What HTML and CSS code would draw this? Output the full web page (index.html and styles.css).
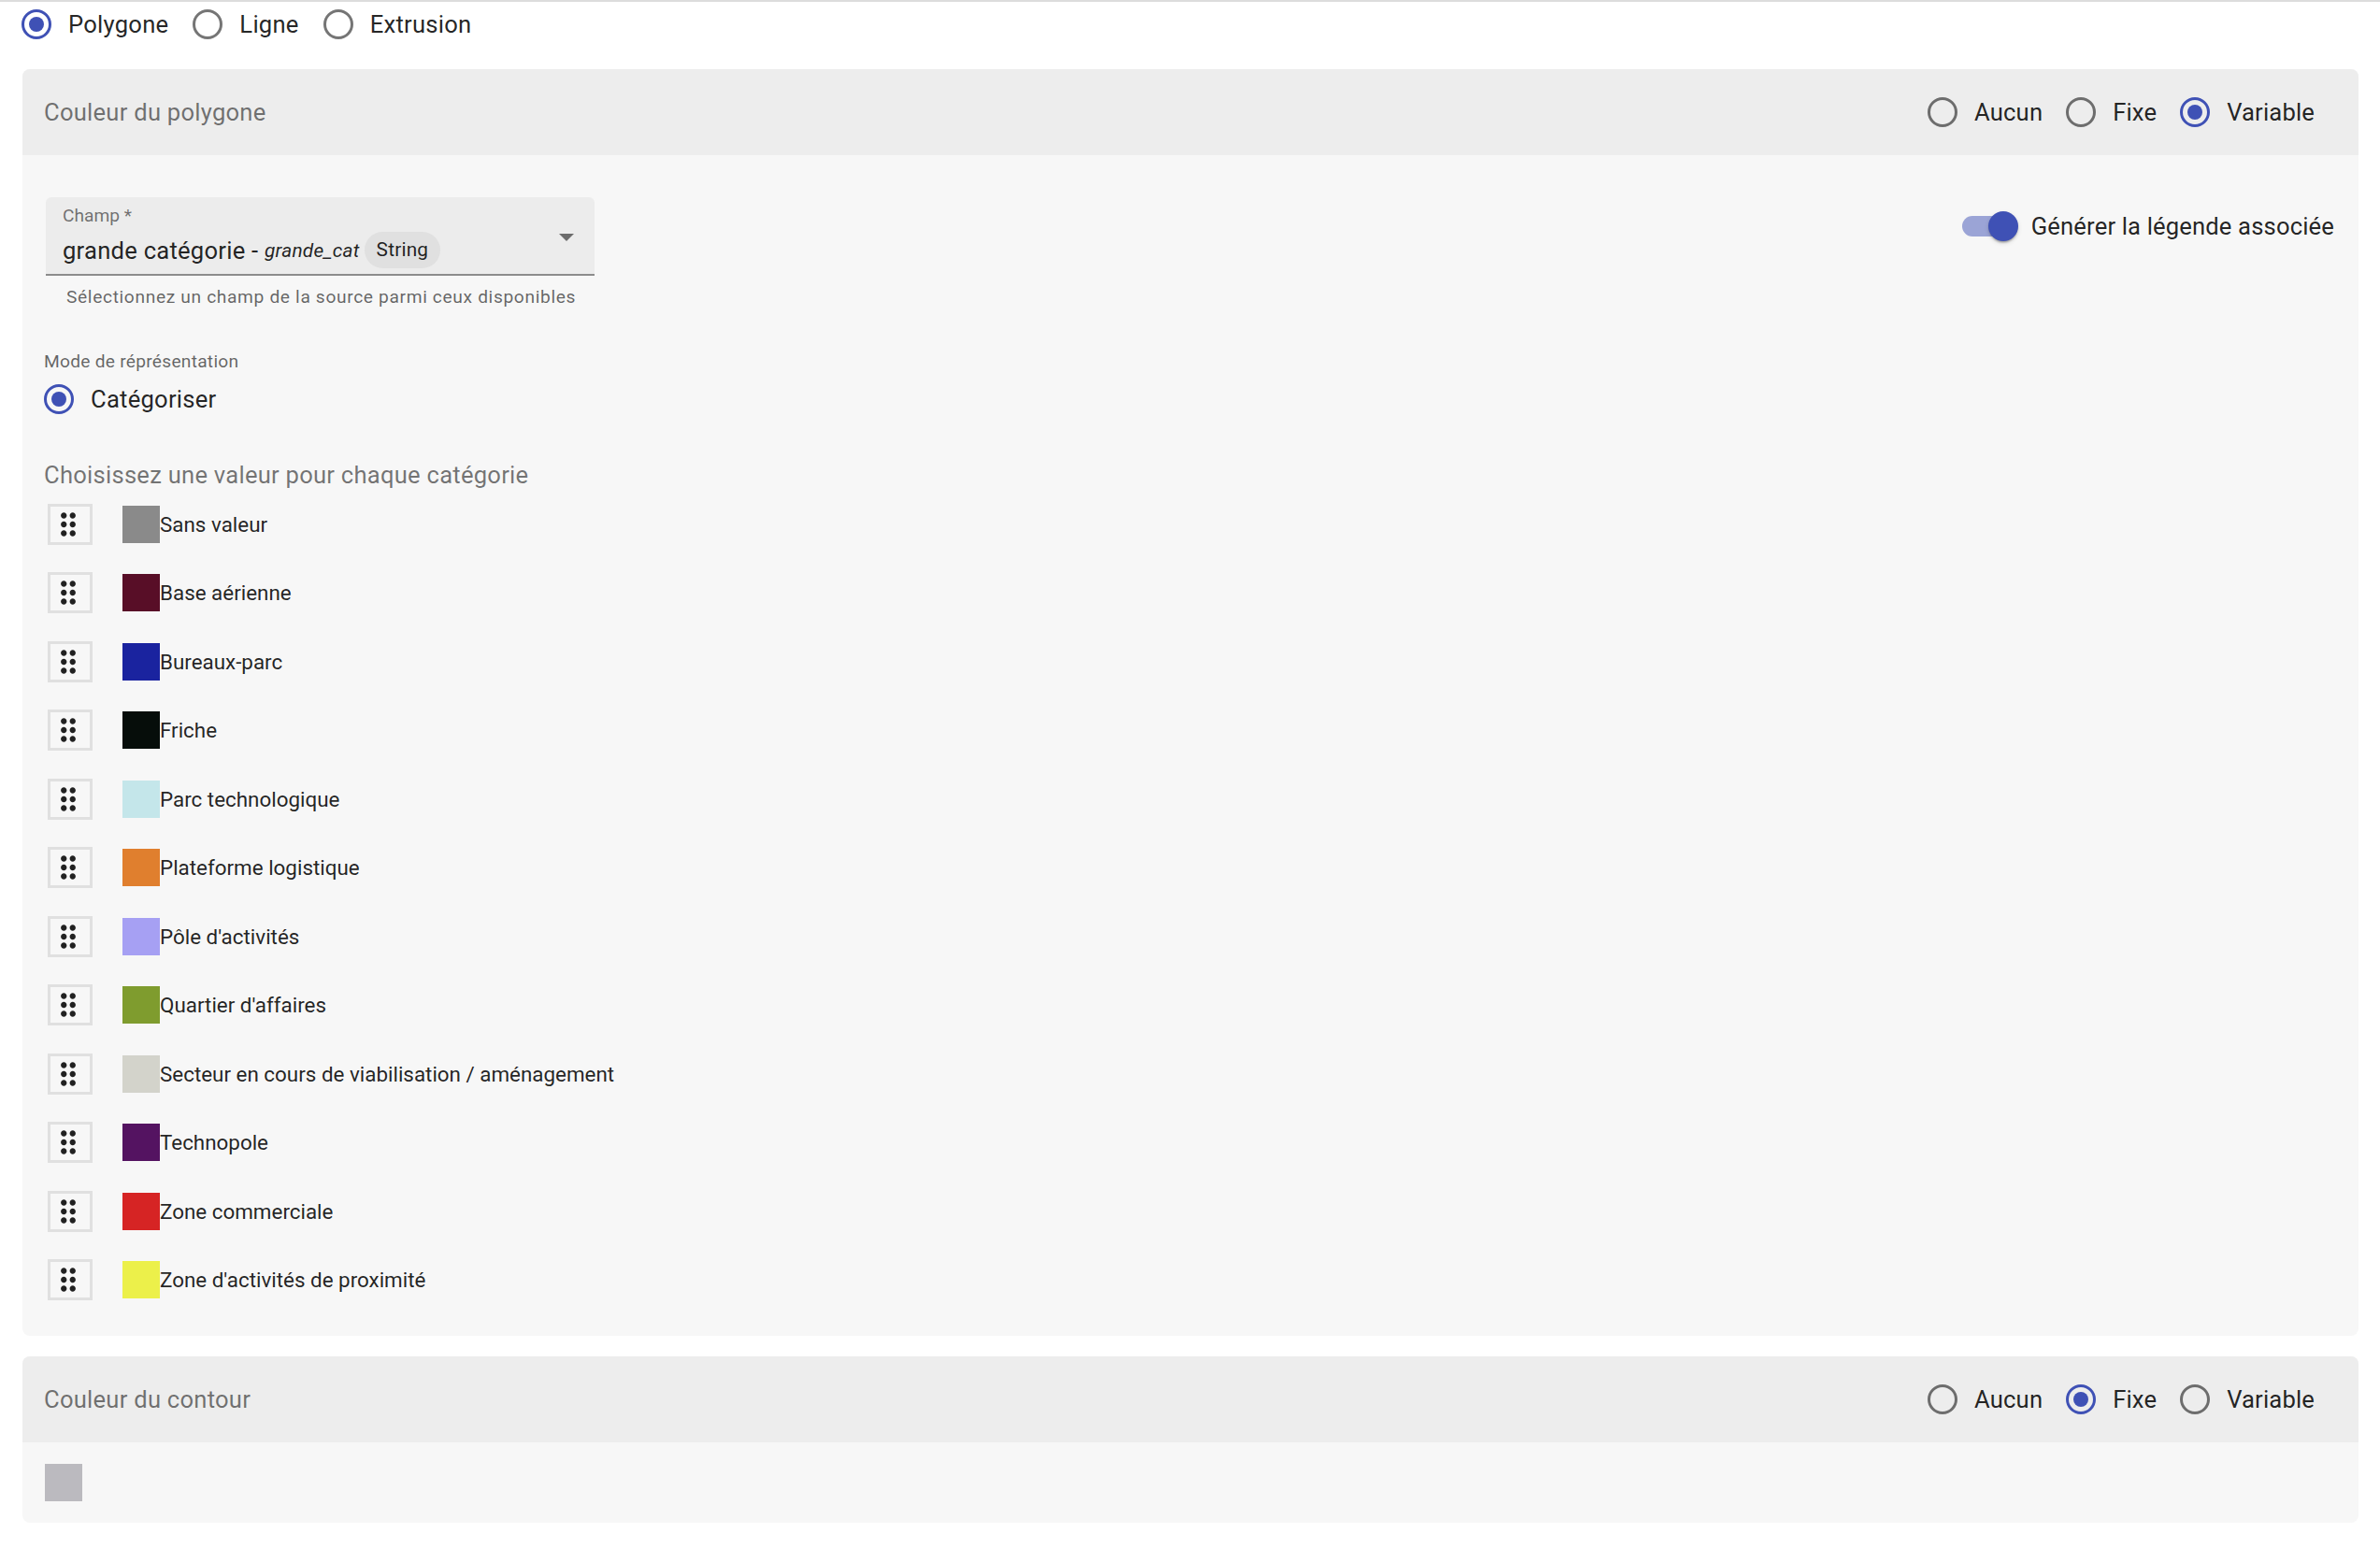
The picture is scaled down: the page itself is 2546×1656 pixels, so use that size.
FILE: index.html
```html
<!DOCTYPE html>
<html lang="fr">
<head>
    <meta charset="UTF-8">
    <meta name="viewport" content="width=device-width, initial-scale=1.0">
    <title>Style de la couche</title>
    <link rel="stylesheet" href="styles.css">
</head>
<body>

    <!-- Type de géométrie -->
    <div class="type-row">
        <label class="radio-option"><span class="radio checked"></span>Polygone</label>
        <label class="radio-option"><span class="radio"></span>Ligne</label>
        <label class="radio-option"><span class="radio"></span>Extrusion</label>
    </div>

    <!-- Couleur du polygone -->
    <div class="card">
        <div class="card-header">
            <span class="card-title">Couleur du polygone</span>
            <div class="radio-group">
                <label class="radio-option"><span class="radio"></span>Aucun</label>
                <label class="radio-option"><span class="radio"></span>Fixe</label>
                <label class="radio-option"><span class="radio checked"></span>Variable</label>
            </div>
        </div>
        <div class="card-body">
            <div class="field-row">
                <div class="field">
                    <div class="select">
                        <span class="select-label">Champ *</span>
                        <div class="select-value">
                            <span class="value-name">grande catégorie - </span>
                            <em class="value-key">grande_cat</em>
                            <span class="chip">String</span>
                        </div>
                        <svg class="select-arrow" viewBox="0 0 16 8"><polygon points="0,0 16,0 8,8"/></svg>
                    </div>
                    <p class="helper">Sélectionnez un champ de la source parmi ceux disponibles</p>
                </div>
                <label class="switch-label">
                    <span class="switch">
                        <span class="switch-track"></span>
                        <span class="switch-thumb"></span>
                    </span>
                    Générer la légende associée
                </label>
            </div>

            <p class="caption">Mode de réprésentation</p>
            <label class="radio-option mode-option"><span class="radio checked"></span>Catégoriser</label>

            <p class="section-title">Choisissez une valeur pour chaque catégorie</p>
            <ul class="category-list">
                <li class="category">
                    <span class="handle"><svg viewBox="0 0 24 24"><path d="M11 18c0 1.1-.9 2-2 2s-2-.9-2-2 .9-2 2-2 2 .9 2 2zm-2-8c-1.1 0-2 .9-2 2s.9 2 2 2 2-.9 2-2-.9-2-2-2zm0-6c-1.1 0-2 .9-2 2s.9 2 2 2 2-.9 2-2-.9-2-2-2zm6 4c1.1 0 2-.9 2-2s-.9-2-2-2-2 .9-2 2 .9 2 2 2zm0 2c-1.1 0-2 .9-2 2s.9 2 2 2 2-.9 2-2-.9-2-2-2zm0 6c-1.1 0-2 .9-2 2s.9 2 2 2 2-.9 2-2-.9-2-2-2z"/></svg></span>
                    <span class="swatch" style="background-color: #8a8a8a;"></span>Sans valeur
                </li>
                <li class="category">
                    <span class="handle"><svg viewBox="0 0 24 24"><path d="M11 18c0 1.1-.9 2-2 2s-2-.9-2-2 .9-2 2-2 2 .9 2 2zm-2-8c-1.1 0-2 .9-2 2s.9 2 2 2 2-.9 2-2-.9-2-2-2zm0-6c-1.1 0-2 .9-2 2s.9 2 2 2 2-.9 2-2-.9-2-2-2zm6 4c1.1 0 2-.9 2-2s-.9-2-2-2-2 .9-2 2 .9 2 2 2zm0 2c-1.1 0-2 .9-2 2s.9 2 2 2 2-.9 2-2-.9-2-2-2zm0 6c-1.1 0-2 .9-2 2s.9 2 2 2 2-.9 2-2-.9-2-2-2z"/></svg></span>
                    <span class="swatch" style="background-color: #580e27;"></span>Base aérienne
                </li>
                <li class="category">
                    <span class="handle"><svg viewBox="0 0 24 24"><path d="M11 18c0 1.1-.9 2-2 2s-2-.9-2-2 .9-2 2-2 2 .9 2 2zm-2-8c-1.1 0-2 .9-2 2s.9 2 2 2 2-.9 2-2-.9-2-2-2zm0-6c-1.1 0-2 .9-2 2s.9 2 2 2 2-.9 2-2-.9-2-2-2zm6 4c1.1 0 2-.9 2-2s-.9-2-2-2-2 .9-2 2 .9 2 2 2zm0 2c-1.1 0-2 .9-2 2s.9 2 2 2 2-.9 2-2-.9-2-2-2zm0 6c-1.1 0-2 .9-2 2s.9 2 2 2 2-.9 2-2-.9-2-2-2z"/></svg></span>
                    <span class="swatch" style="background-color: #1a239f;"></span>Bureaux-parc
                </li>
                <li class="category">
                    <span class="handle"><svg viewBox="0 0 24 24"><path d="M11 18c0 1.1-.9 2-2 2s-2-.9-2-2 .9-2 2-2 2 .9 2 2zm-2-8c-1.1 0-2 .9-2 2s.9 2 2 2 2-.9 2-2-.9-2-2-2zm0-6c-1.1 0-2 .9-2 2s.9 2 2 2 2-.9 2-2-.9-2-2-2zm6 4c1.1 0 2-.9 2-2s-.9-2-2-2-2 .9-2 2 .9 2 2 2zm0 2c-1.1 0-2 .9-2 2s.9 2 2 2 2-.9 2-2-.9-2-2-2zm0 6c-1.1 0-2 .9-2 2s.9 2 2 2 2-.9 2-2-.9-2-2-2z"/></svg></span>
                    <span class="swatch" style="background-color: #060d0a;"></span>Friche
                </li>
                <li class="category">
                    <span class="handle"><svg viewBox="0 0 24 24"><path d="M11 18c0 1.1-.9 2-2 2s-2-.9-2-2 .9-2 2-2 2 .9 2 2zm-2-8c-1.1 0-2 .9-2 2s.9 2 2 2 2-.9 2-2-.9-2-2-2zm0-6c-1.1 0-2 .9-2 2s.9 2 2 2 2-.9 2-2-.9-2-2-2zm6 4c1.1 0 2-.9 2-2s-.9-2-2-2-2 .9-2 2 .9 2 2 2zm0 2c-1.1 0-2 .9-2 2s.9 2 2 2 2-.9 2-2-.9-2-2-2zm0 6c-1.1 0-2 .9-2 2s.9 2 2 2 2-.9 2-2-.9-2-2-2z"/></svg></span>
                    <span class="swatch" style="background-color: #c4e6ea;"></span>Parc technologique
                </li>
                <li class="category">
                    <span class="handle"><svg viewBox="0 0 24 24"><path d="M11 18c0 1.1-.9 2-2 2s-2-.9-2-2 .9-2 2-2 2 .9 2 2zm-2-8c-1.1 0-2 .9-2 2s.9 2 2 2 2-.9 2-2-.9-2-2-2zm0-6c-1.1 0-2 .9-2 2s.9 2 2 2 2-.9 2-2-.9-2-2-2zm6 4c1.1 0 2-.9 2-2s-.9-2-2-2-2 .9-2 2 .9 2 2 2zm0 2c-1.1 0-2 .9-2 2s.9 2 2 2 2-.9 2-2-.9-2-2-2zm0 6c-1.1 0-2 .9-2 2s.9 2 2 2 2-.9 2-2-.9-2-2-2z"/></svg></span>
                    <span class="swatch" style="background-color: #e07f2e;"></span>Plateforme logistique
                </li>
                <li class="category">
                    <span class="handle"><svg viewBox="0 0 24 24"><path d="M11 18c0 1.1-.9 2-2 2s-2-.9-2-2 .9-2 2-2 2 .9 2 2zm-2-8c-1.1 0-2 .9-2 2s.9 2 2 2 2-.9 2-2-.9-2-2-2zm0-6c-1.1 0-2 .9-2 2s.9 2 2 2 2-.9 2-2-.9-2-2-2zm6 4c1.1 0 2-.9 2-2s-.9-2-2-2-2 .9-2 2 .9 2 2 2zm0 2c-1.1 0-2 .9-2 2s.9 2 2 2 2-.9 2-2-.9-2-2-2zm0 6c-1.1 0-2 .9-2 2s.9 2 2 2 2-.9 2-2-.9-2-2-2z"/></svg></span>
                    <span class="swatch" style="background-color: #a6a0f3;"></span>Pôle d'activités
                </li>
                <li class="category">
                    <span class="handle"><svg viewBox="0 0 24 24"><path d="M11 18c0 1.1-.9 2-2 2s-2-.9-2-2 .9-2 2-2 2 .9 2 2zm-2-8c-1.1 0-2 .9-2 2s.9 2 2 2 2-.9 2-2-.9-2-2-2zm0-6c-1.1 0-2 .9-2 2s.9 2 2 2 2-.9 2-2-.9-2-2-2zm6 4c1.1 0 2-.9 2-2s-.9-2-2-2-2 .9-2 2 .9 2 2 2zm0 2c-1.1 0-2 .9-2 2s.9 2 2 2 2-.9 2-2-.9-2-2-2zm0 6c-1.1 0-2 .9-2 2s.9 2 2 2 2-.9 2-2-.9-2-2-2z"/></svg></span>
                    <span class="swatch" style="background-color: #7f9c2e;"></span>Quartier d'affaires
                </li>
                <li class="category">
                    <span class="handle"><svg viewBox="0 0 24 24"><path d="M11 18c0 1.1-.9 2-2 2s-2-.9-2-2 .9-2 2-2 2 .9 2 2zm-2-8c-1.1 0-2 .9-2 2s.9 2 2 2 2-.9 2-2-.9-2-2-2zm0-6c-1.1 0-2 .9-2 2s.9 2 2 2 2-.9 2-2-.9-2-2-2zm6 4c1.1 0 2-.9 2-2s-.9-2-2-2-2 .9-2 2 .9 2 2 2zm0 2c-1.1 0-2 .9-2 2s.9 2 2 2 2-.9 2-2-.9-2-2-2zm0 6c-1.1 0-2 .9-2 2s.9 2 2 2 2-.9 2-2-.9-2-2-2z"/></svg></span>
                    <span class="swatch" style="background-color: #d3d3cb;"></span>Secteur en cours de viabilisation / aménagement
                </li>
                <li class="category">
                    <span class="handle"><svg viewBox="0 0 24 24"><path d="M11 18c0 1.1-.9 2-2 2s-2-.9-2-2 .9-2 2-2 2 .9 2 2zm-2-8c-1.1 0-2 .9-2 2s.9 2 2 2 2-.9 2-2-.9-2-2-2zm0-6c-1.1 0-2 .9-2 2s.9 2 2 2 2-.9 2-2-.9-2-2-2zm6 4c1.1 0 2-.9 2-2s-.9-2-2-2-2 .9-2 2 .9 2 2 2zm0 2c-1.1 0-2 .9-2 2s.9 2 2 2 2-.9 2-2-.9-2-2-2zm0 6c-1.1 0-2 .9-2 2s.9 2 2 2 2-.9 2-2-.9-2-2-2z"/></svg></span>
                    <span class="swatch" style="background-color: #541361;"></span>Technopole
                </li>
                <li class="category">
                    <span class="handle"><svg viewBox="0 0 24 24"><path d="M11 18c0 1.1-.9 2-2 2s-2-.9-2-2 .9-2 2-2 2 .9 2 2zm-2-8c-1.1 0-2 .9-2 2s.9 2 2 2 2-.9 2-2-.9-2-2-2zm0-6c-1.1 0-2 .9-2 2s.9 2 2 2 2-.9 2-2-.9-2-2-2zm6 4c1.1 0 2-.9 2-2s-.9-2-2-2-2 .9-2 2 .9 2 2 2zm0 2c-1.1 0-2 .9-2 2s.9 2 2 2 2-.9 2-2-.9-2-2-2zm0 6c-1.1 0-2 .9-2 2s.9 2 2 2 2-.9 2-2-.9-2-2-2z"/></svg></span>
                    <span class="swatch" style="background-color: #d62424;"></span>Zone commerciale
                </li>
                <li class="category">
                    <span class="handle"><svg viewBox="0 0 24 24"><path d="M11 18c0 1.1-.9 2-2 2s-2-.9-2-2 .9-2 2-2 2 .9 2 2zm-2-8c-1.1 0-2 .9-2 2s.9 2 2 2 2-.9 2-2-.9-2-2-2zm0-6c-1.1 0-2 .9-2 2s.9 2 2 2 2-.9 2-2-.9-2-2-2zm6 4c1.1 0 2-.9 2-2s-.9-2-2-2-2 .9-2 2 .9 2 2 2zm0 2c-1.1 0-2 .9-2 2s.9 2 2 2 2-.9 2-2-.9-2-2-2zm0 6c-1.1 0-2 .9-2 2s.9 2 2 2 2-.9 2-2-.9-2-2-2z"/></svg></span>
                    <span class="swatch" style="background-color: #ecf04a;"></span>Zone d'activités de proximité
                </li>
            </ul>
        </div>
    </div>

    <!-- Couleur du contour -->
    <div class="card">
        <div class="card-header">
            <span class="card-title">Couleur du contour</span>
            <div class="radio-group">
                <label class="radio-option"><span class="radio"></span>Aucun</label>
                <label class="radio-option"><span class="radio checked"></span>Fixe</label>
                <label class="radio-option"><span class="radio"></span>Variable</label>
            </div>
        </div>
        <div class="card-body contour-body">
            <span class="swatch" style="background-color: #bbbabf;"></span>
        </div>
    </div>

</body>
</html>
```

FILE: styles.css
```css
* {
    box-sizing: border-box;
}
body {
    margin: 0;
    padding: 0 23px 0 24px;
    border-top: 2px solid #dcdcdc;
    font-family: Roboto, "Liberation Sans", sans-serif;
    color: rgba(0, 0, 0, 0.87);
    background-color: #fff;
}

/* radios */
.type-row {
    display: flex;
    align-items: center;
    gap: 26px;
    height: 48px;
    margin-left: -1px;
}
.radio-option {
    display: flex;
    align-items: center;
    gap: 18px;
    font-size: 25.6px;
    line-height: 38px;
    letter-spacing: 0.24px;
}
.radio {
    display: flex;
    align-items: center;
    justify-content: center;
    flex-shrink: 0;
    width: 32px;
    height: 32px;
    border: 3px solid rgba(0, 0, 0, 0.54);
    border-radius: 50%;
}
.radio.checked {
    border-color: #3f51b5;
}
.radio.checked::after {
    content: "";
    width: 16px;
    height: 16px;
    border-radius: 50%;
    background-color: #3f51b5;
}
.radio-group {
    display: flex;
    gap: 25px;
}
.radio-group .radio-option {
    letter-spacing: 0.15px;
}

/* cards */
.card {
    margin-top: 24px;
    background-color: #f7f7f7;
    border-radius: 8px;
}
.card + .card {
    margin-top: 22px;
}
.card-header {
    display: flex;
    align-items: center;
    justify-content: space-between;
    height: 92px;
    padding: 0 47px 0 23px;
    background-color: #ededed;
    border-radius: 8px 8px 0 0;
}
.card-title {
    font-size: 25.6px;
    letter-spacing: 0.24px;
    color: rgba(0, 0, 0, 0.54);
}
.card-body {
    padding: 45px 26px 37.5px 23px;
}
.contour-body {
    padding: 23px 23px 23px 24px;
}

/* champ */
.field-row {
    display: flex;
    justify-content: space-between;
    align-items: flex-start;
}
.field {
    margin-left: 2px;
}
.select {
    position: relative;
    width: 587px;
    height: 84px;
    padding: 8px 18px 0;
    background-color: #ececec;
    border-bottom: 2px solid #8c8c8c;
    border-radius: 6px 6px 0 0;
}
.select-label {
    display: block;
    font-size: 19.2px;
    line-height: 23px;
    color: rgba(0, 0, 0, 0.54);
}
.select-value {
    display: flex;
    align-items: center;
    height: 39px;
    margin-top: 6px;
    font-size: 25.6px;
    letter-spacing: 0.24px;
    white-space: pre;
}
.value-key {
    font-size: 20.8px;
}
.chip {
    margin-left: 5px;
    height: 39px;
    padding: 0 13px;
    border-radius: 20px;
    background-color: #e0e0e0;
    font-size: 20.8px;
    line-height: 39px;
    letter-spacing: 0.2px;
}
.select-arrow {
    position: absolute;
    top: 39px;
    right: 22px;
    width: 16px;
    height: 8px;
    fill: rgba(0, 0, 0, 0.54);
}
.helper {
    margin: 7px 0 0 22px;
    font-size: 19.2px;
    line-height: 32px;
    letter-spacing: 0.64px;
    color: rgba(0, 0, 0, 0.6);
}

/* switch */
.switch-label {
    display: flex;
    align-items: center;
    height: 61px;
    font-size: 25.6px;
    letter-spacing: 0.15px;
}
.switch {
    position: relative;
    width: 60px;
    height: 32px;
    margin-right: 14px;
}
.switch-track {
    position: absolute;
    left: 0;
    top: 5px;
    width: 54px;
    height: 22px;
    border-radius: 11px;
    background-color: rgba(63, 81, 181, 0.5);
}
.switch-thumb {
    position: absolute;
    left: 28px;
    top: 0;
    width: 32px;
    height: 32px;
    border-radius: 50%;
    background-color: #3f51b5;
    box-shadow: 0 3px 2px -2px rgba(0, 0, 0, 0.2), 0 2px 2px 0 rgba(0, 0, 0, 0.14), 0 2px 5px 0 rgba(0, 0, 0, 0.12);
}

/* représentation */
.caption {
    margin: 40.5px 0 0;
    font-size: 19.2px;
    line-height: 23px;
    letter-spacing: 0.25px;
    color: rgba(0, 0, 0, 0.6);
}
.mode-option {
    margin-top: 10.5px;
}
.section-title {
    margin: 46.5px 0 0;
    font-size: 25.6px;
    line-height: 31px;
    letter-spacing: 0.24px;
    color: rgba(0, 0, 0, 0.54);
}
.category-list {
    display: flex;
    flex-direction: column;
    gap: 28.5px;
    margin: 14.5px 0 0 4px;
    padding: 0;
    list-style: none;
}
.category {
    display: flex;
    align-items: center;
    height: 45px;
    font-size: 22.4px;
}
.handle {
    display: flex;
    align-items: center;
    width: 48px;
    height: 44px;
    margin-right: 32px;
    padding-right: 4px;
    border: 3px solid #e0e0e0;
}
.handle svg {
    width: 38px;
    height: 38px;
    fill: #212121;
}
.swatch {
    display: block;
    flex-shrink: 0;
    width: 40px;
    height: 40px;
}
```
